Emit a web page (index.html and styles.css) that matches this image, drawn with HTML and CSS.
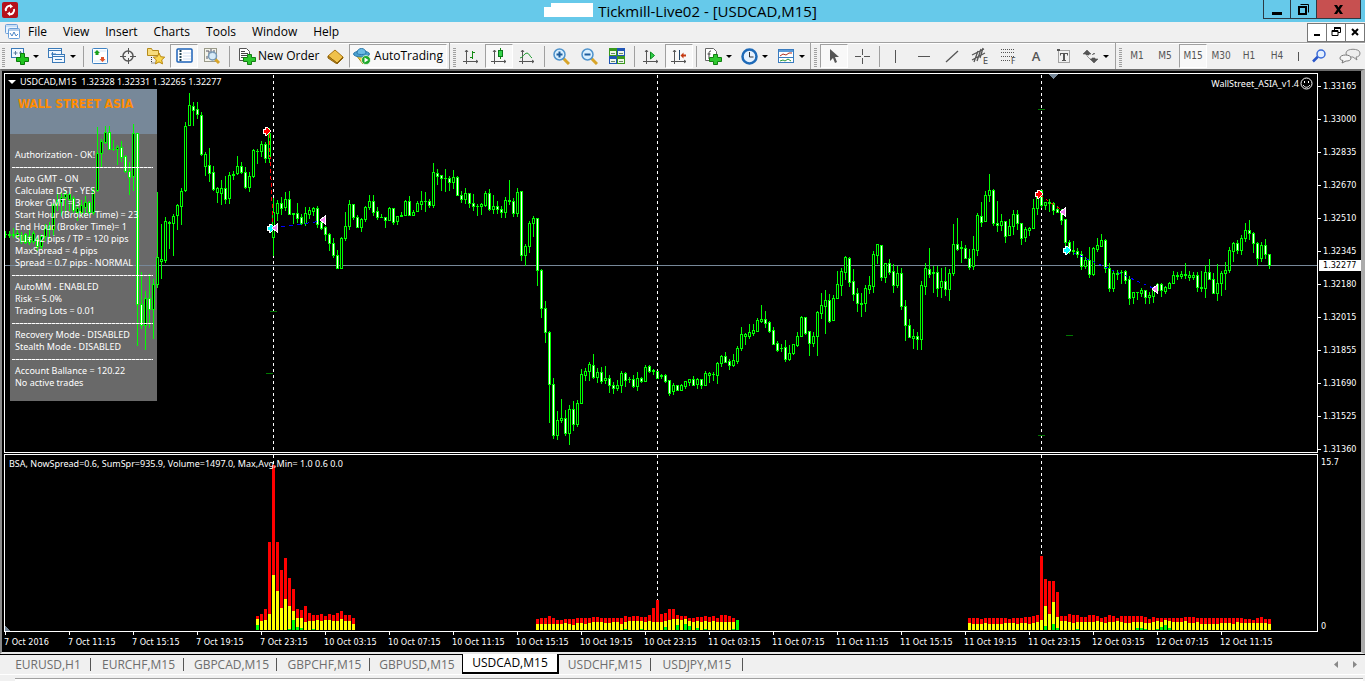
FILE: index.html
```html
<!DOCTYPE html>
<html lang="en">
<head>
<meta charset="utf-8">
<title>Tickmill-Live02 - [USDCAD,M15]</title>
<link rel="stylesheet" href="styles.css">
</head>
<body>
<header class="titlebar">
  <svg class="app-icon" width="16" height="16" viewBox="0 0 16 16"><rect width="16" height="16" rx="2" fill="#b5121b"/><path d="M4 9a4 4 0 0 1 5-5M12 7a4 4 0 0 1-5 5" fill="none" stroke="#fff" stroke-width="2"/><path d="M8 2l3 2.500-3 2zM8 14l-3-2.500 3-2z" fill="#fff"/></svg>
  <div class="caption"><svg width="50" height="16" viewBox="0 0 50 16"><path d="M0 4h7V0h42v14H0z" fill="#fff"/></svg><h1>Tickmill-Live02 - [USDCAD,M15]</h1></div>
  <div class="window-buttons">
    <button class="win min" aria-label="Minimize"><svg width="10" height="10"><path d="M0 6h10v3H0z"/></svg></button>
    <button class="win restore" aria-label="Restore"><svg width="11" height="11"><path d="M2.500.5h8v8" fill="none" stroke="#000"/><path d="M1 3h7v7H1z" fill="none" stroke="#000" stroke-width="2"/></svg></button>
    <button class="win close" aria-label="Close"><svg width="9" height="9"><path d="M0 0h3l1.500 2.500L6 0h3L6 4.500 9 9H6L4.500 6.500 3 9H0l3-4.500z"/></svg></button>
  </div>
</header>
<nav class="menubar">
  <svg class="doc-icon" width="16" height="16" viewBox="0 0 16 16"><rect x=".5" y=".5" width="12" height="9" rx="1" fill="#eaf4ff" stroke="#6a9fd8"/><path d="M.5 2h12" stroke="#6a9fd8" stroke-dasharray="1 1"/><rect x="3.500" y="4.500" width="11" height="10" rx="1" fill="#fff" stroke="#6a9fd8"/><path d="M3.500 6h11" stroke="#6a9fd8"/><path d="M5 9l2 3 2-4 2 4 2-2" fill="none" stroke="#4d86c6"/></svg>
  <button>File</button><button>View</button><button>Insert</button><button>Charts</button><button>Tools</button><button>Window</button><button>Help</button>
  <div class="mdi-buttons">
    <button aria-label="Minimize chart"><svg width="10" height="10"><path d="M2 7h6v2H2z"/></svg></button>
    <button aria-label="Restore chart"><svg width="10" height="10"><path d="M3 .500h6.500v5H7M3.500 0v3M3 1.500h6M1 3.500h6v5H1zM1 4.500h6" fill="none" stroke="#000"/></svg></button>
    <button aria-label="Close chart"><svg width="10" height="10"><path d="M2 2l6 6M8 2l-6 6" stroke="#000" stroke-width="2"/></svg></button>
  </div>
</nav>
<div class="toolbar">
  <div class="group first">
    <button class="tool drop" aria-label="New chart"><svg width="18" height="18"><rect x=".5" y="1.500" width="12" height="9" fill="#f2f8ff" stroke="#3b7ab8"/><path d="M2.500 6h4M4.500 4v4M8 6h3M9.500 4v4" stroke="#5a7d9f"/><path d="M9.500 6.500h4v4h4v4h-4v3h-4v-3h-4v-4h4z" fill="#1fc41f" stroke="#0a7a0a"/></svg></button>
    <button class="tool drop" aria-label="Profiles"><svg width="18" height="18"><rect x=".5" y="1.500" width="13" height="9" fill="#f2f8ff" stroke="#3b7ab8"/><path d="M.5 3.500h13M3 7h5M4.500 5v4" stroke="#3b7ab8"/><rect x="4.500" y="7.500" width="12" height="8" fill="#f2f8ff" stroke="#3b7ab8"/><path d="M4.500 9.500h12M7 12.500h7" stroke="#3b7ab8"/></svg></button>
    <span class="sep"></span>
    <button class="tool" aria-label="Market Watch"><svg width="16" height="16"><rect x=".5" y=".5" width="15" height="15" rx="1" fill="#fff" stroke="#3f83c4"/><path d="M2 13h12M2 3h12" stroke="#d5e6f5"/><path d="M5 2l3 3H6.500v2h-3V5H2z" fill="#1ba01b"/><path d="M10.500 14l3-3H12V9H9v2H7.500z" fill="#e2542a"/></svg></button>
    <button class="tool" aria-label="Data Window"><svg width="16" height="16"><circle cx="8" cy="8" r="5" fill="none" stroke="#555" stroke-width="1.500"/><path d="M8.500 0v6M8.500 10v6M0 8.500h6M10 8.500h6" stroke="#555"/></svg></button>
    <button class="tool" aria-label="Navigator"><svg width="18" height="18"><path d="M.5 1.500h4l1 2h6v5H.500z" fill="#f7dc7b" stroke="#b58a1a"/><path d="M4.500 10v6h4" fill="none" stroke="#333" stroke-dasharray="1 1"/><path d="M12 6l1.700 3.700 4 .5-3 2.700.8 4-3.500-2-3.500 2 .8-4-3-2.700 4-.5z" fill="#fbd84f" stroke="#b8860b"/></svg></button>
    <button class="tool on" aria-label="Terminal"><svg width="17" height="16"><rect x="1" y="1" width="15" height="13" rx="1" fill="#fff" stroke="#1c62b8" stroke-width="1.500"/><path d="M4.500 2v11" stroke="#245" stroke-width="2" stroke-dasharray="2 1"/><path d="M7 5h8M7 8h8M7 11h8" stroke="#cfe0f4"/></svg></button>
    <button class="tool" aria-label="Strategy Tester"><svg width="18" height="18"><rect x="1.500" y="1.500" width="12" height="13" fill="#f3f3ea" stroke="#9a9a8a"/><path d="M3 4h3v5M8 2v5M11 3v4M4 9v3" stroke="#556" fill="none"/><path d="M12 12l4 4" stroke="#d8a52a" stroke-width="3"/><circle cx="9.500" cy="9" r="4" fill="#cfe9fb" fill-opacity=".8" stroke="#7798b5" stroke-width="1.500"/></svg></button>
    <span class="sep"></span>
    <button class="tool label order"><svg width="18" height="18"><path d="M1.500 1.500h7l3 3v9h-10z" fill="#fff" stroke="#555"/><path d="M3 4.500h4M3 6.500h7M3 8.500h7M3 10.500h4" stroke="#444"/><path d="M9.500 7.500h4v3h4v4h-4v3h-4v-3h-4v-4h4z" fill="#2fc82f" stroke="#128012"/></svg><span>New Order</span></button>
    <button class="tool" aria-label="MetaEditor"><svg width="17" height="16"><path d="M1 8l7-6 8 7-6 6z" fill="#f0c14b" stroke="#a87411"/><path d="M1 8v2l9 6 6-6V9l-6 6z" fill="#c98f1d" stroke="#8d610a"/></svg></button>
    <button class="tool label on auto"><svg width="18" height="18"><path d="M3 8l7 9 6-9z" fill="#f5cf3d" stroke="#b28b12"/><ellipse cx="8.500" cy="7" rx="8" ry="3" fill="#4ba0d0" stroke="#2b78a8"/><path d="M4 6c0-6 9-6 9 0 0 2-9 2-9 0" fill="#6cbce6" stroke="#2b78a8"/><circle cx="13" cy="13" r="4.500" fill="#1fa82a" stroke="#fff" stroke-width=".7"/><path d="M11.500 10.500v5l4-2.500z" fill="#fff"/></svg><span>AutoTrading</span></button>
  </div>
  <div class="group charts">
    <button class="tool" aria-label="Bar chart"><svg width="16" height="16"><path d="M3.500 2v14M0 13.500h15M2 4l1.500-2L5 4M13 12l2 1.500-2 1.500" fill="none" stroke="#555"/><path d="M9.500 3v8M7 9.500h2M10 4.500h2" stroke="#138a13" fill="none"/></svg></button>
    <button class="tool on" aria-label="Candlesticks"><svg width="16" height="16"><path d="M3.500 2v14M0 13.500h15M2 4l1.500-2L5 4M13 12l2 1.500-2 1.500" fill="none" stroke="#555"/><path d="M9.500 0v11" stroke="#138a13"/><rect x="7.500" y="2.500" width="4" height="6" fill="#35d44a" stroke="#0b7a1a"/></svg></button>
    <button class="tool" aria-label="Line chart"><svg width="16" height="16"><path d="M3.500 2v14M0 13.500h15M2 4l1.500-2L5 4M13 12l2 1.500-2 1.500" fill="none" stroke="#555"/><path d="M1 10c3 0 4-5 7-5 2 0 3 4 5 5" fill="none" stroke="#1d9a2d"/></svg></button>
    <span class="sep"></span>
    <button class="tool" aria-label="Zoom in"><svg width="18" height="18"><path d="M11 11l6 6" stroke="#d8a52a" stroke-width="3"/><circle cx="7.500" cy="7.500" r="5.500" fill="#d9f0ff" stroke="#4f93cc" stroke-width="1.500"/><path d="M4.500 7.500h6M7.500 4.500v6" stroke="#1f5d9c" stroke-width="2"/></svg></button>
    <button class="tool" aria-label="Zoom out"><svg width="18" height="18"><path d="M11 11l6 6" stroke="#d8a52a" stroke-width="3"/><circle cx="7.500" cy="7.500" r="5.500" fill="#d9f0ff" stroke="#4f93cc" stroke-width="1.500"/><path d="M4.500 7.500h6" stroke="#1f5d9c" stroke-width="2"/></svg></button>
    <button class="tool" aria-label="Tile windows"><svg width="16" height="16"><path d="M0 0h8v8H0zM8 8h8v8H8z" fill="#3a9a1c"/><path d="M8 0h8v8H8zM0 8h8v8H0z" fill="#1f55b5"/><path d="M1 3h6v4H1zM9 3h6v4H9zM1 11h6v4H1zM9 11h6v4H9z" fill="#eef6e8"/><path d="M2 5.500h4M10 5.500h4M2 13.500h4M10 13.500h4" stroke="#6a8a6a"/></svg></button>
    <span class="sep"></span>
    <button class="tool" aria-label="Auto scroll"><svg width="16" height="16"><path d="M3.500 2v14M0 13.500h15M2 4l1.500-2L5 4M13 12l2 1.500-2 1.500" fill="none" stroke="#555"/><path d="M7.500 4v7l4-3.500z" fill="#2fd04a" stroke="#0a8a1a"/></svg></button>
    <button class="tool on" aria-label="Chart shift"><svg width="16" height="16"><path d="M3.500 2v14M0 13.500h15M2 4l1.500-2L5 4M13 12l2 1.500-2 1.500" fill="none" stroke="#555"/><path d="M8.500 2v10" stroke="#246"/><path d="M9.500 7.500l3-3v2H15v2h-2.500v2z" fill="#c43a12"/></svg></button>
    <span class="sep"></span>
    <button class="tool drop" aria-label="Indicators"><svg width="18" height="18"><path d="M1.500 1.500h8l3 3v9h-11z" fill="#fff" stroke="#666"/><path d="M7 4c-2 0-2 1-2 3v5M3.500 7h3" fill="none" stroke="#444"/><path d="M9.500 7.500h4v3h4v4h-4v3h-4v-3h-4v-4h4z" fill="#2fc82f" stroke="#128012"/></svg></button>
    <button class="tool drop" aria-label="Periods"><svg width="17" height="17"><circle cx="8.500" cy="8.500" r="7" fill="#e6f2ff" stroke="#1e6ab8" stroke-width="2.500"/><path d="M8.500 4v5h4" fill="none" stroke="#333"/></svg></button>
    <button class="tool drop" aria-label="Templates"><svg width="17" height="16"><rect x=".5" y="1.500" width="15" height="13" fill="#fff" stroke="#3a7cc0"/><path d="M1 3h14" stroke="#5a9ad8" stroke-width="2"/><path d="M2 8l3-2 3 1 3-2h3" fill="none" stroke="#b03020"/><path d="M1 9.500h14" stroke="#3a7cc0"/><path d="M2 13l3-1 2 1 3-2 3 2" fill="none" stroke="#2a9a3a"/></svg></button>
  </div>
  <div class="group draw">
    <button class="tool on" aria-label="Cursor"><svg width="16" height="16"><path d="M4 1v12l3-3 2 5 2-1-2-5h4z" fill="#555"/></svg></button>
    <button class="tool" aria-label="Crosshair"><svg width="16" height="16"><path d="M8.500 1v6M8.500 10v6M1 8.500h6M10 8.500h6" stroke="#555"/></svg></button>
    <span class="sep"></span>
    <button class="tool" aria-label="Vertical line"><svg width="16" height="16"><path d="M7.500 2v13" stroke="#555"/></svg></button>
    <button class="tool" aria-label="Horizontal line"><svg width="16" height="16"><path d="M2 8.500h12" stroke="#555"/></svg></button>
    <button class="tool" aria-label="Trendline"><svg width="16" height="16"><path d="M2 14L14 3" stroke="#555" stroke-width="1.300"/></svg></button>
    <button class="tool" aria-label="Equidistant channel"><svg width="18" height="18"><path d="M1 8l12-6M1 13L14 6M3 15l4-11M6 14l4-12M9 11l3-10" stroke="#555" stroke-width="1.300"/><text x="12" y="17" class="mark">E</text></svg></button>
    <button class="tool" aria-label="Fibonacci retracement"><svg width="18" height="18"><path d="M2 2.500h14M2 5.500h14M2 9.500h14M2 13.500h9" stroke="#555" stroke-dasharray="1 1"/><text x="12" y="17" class="mark">F</text></svg></button>
    <button class="tool glyph">A</button>
    <button class="tool" aria-label="Text label"><svg width="16" height="16"><rect x="2.500" y="2.500" width="11" height="12" fill="none" stroke="#555" stroke-dasharray="1 1"/><path d="M1 1h3v2H1z" fill="#555"/><path d="M4 5.500h8M4.500 5v2.500M11.500 5v2.500M6 12.500h4" stroke="#555"/><path d="M8 5v8" stroke="#555" stroke-width="2"/></svg></button>
    <button class="tool drop" aria-label="Arrows"><svg width="16" height="16"><path d="M4 2l4 4H6v1H3V6H0zM11 15l-4-4h2v-1h3v1h3zM4 8l3 3M9 7l2-2 1 1" fill="#555" stroke="#555" stroke-width=".6"/></svg></button>
  </div>
  <div class="group periods">
    <button class="tool">M1</button><button class="tool">M5</button><button class="tool on">M15</button><button class="tool">M30</button><button class="tool">H1</button><button class="tool">H4</button>
  </div>
  <div class="extras">
    <button aria-label="More periods"><svg width="2" height="16"><path d="M.5 4v9" stroke="#555"/></svg></button>
    <button aria-label="Search"><svg width="15" height="16"><path d="M6 8.500l-5 5" stroke="#2a56c8" stroke-width="2.500"/><circle cx="9" cy="6" r="4" fill="#e4f0ff" stroke="#3a6ad8" stroke-width="1.500"/></svg></button>
    <button aria-label="Community"><svg width="22" height="16"><path d="M7 5c0-5 14-5 14 0 0 3-2 4-4 4l1 3-4-3c-4 0-7-1-7-4z" fill="#eee" stroke="#888"/><path d="M1 10c0-4 11-4 11 0 0 3-4 3-5 3l-4 2 1-2.500C2 12 1 12 1 10z" fill="#f6f6f6" stroke="#777"/></svg></button>
  </div>
</div>

<main class="chart-window">
  <div class="chart">
    <section class="pane price-pane">
      <aside class="info">
        <h2>WALL STREET ASIA</h2>
        <ul>
          <li>Authorization - OK!</li>
          <li class="rule"></li>
          <li>Auto GMT - ON</li>
          <li>Calculate DST - YES</li>
          <li>Broker GMT = 3</li>
          <li>Start Hour (Broker Time) = 23</li>
          <li>End Hour (Broker Time)= 1</li>
          <li>SL = 42 pips / TP = 120 pips</li>
          <li>MaxSpread = 4 pips</li>
          <li>Spread = 0.7 pips - NORMAL</li>
          <li class="rule"></li>
          <li>AutoMM - ENABLED</li>
          <li>Risk = 5.0%</li>
          <li>Trading Lots = 0.01</li>
          <li class="rule"></li>
          <li>Recovery Mode - DISABLED</li>
          <li>Stealth Mode - DISABLED</li>
          <li class="rule"></li>
          <li>Account Ballance = 120.22</li>
          <li>No active trades</li>
        </ul>
      </aside>
      <svg class="plot" id="price-plot" role="img" aria-label="USDCAD candlesticks"></svg>
      <p class="quote">USDCAD,M15&nbsp; 1.32328 1.32331 1.32265 1.32277</p>
      <p class="expert">WallStreet_ASIA_v1.4<svg width="13" height="13"><circle cx="6.500" cy="6.500" r="5.500" fill="none" stroke="#fff"/><path d="M4 4h1v2H4zM8 4h1v2H8z" fill="#fff"/><path d="M3 8c2 3 5 3 7 0" fill="none" stroke="#fff"/></svg></p>
    </section>
    <div class="scale">
      <ol class="prices"><li>1.33165</li><li>1.33000</li><li>1.32835</li><li>1.32670</li><li>1.32510</li><li>1.32345</li><li>1.32180</li><li>1.32015</li><li>1.31855</li><li>1.31690</li><li>1.31525</li><li>1.31360</li></ol>
      <output class="last">1.32277</output>
    </div>
    <section class="pane spread-pane">
      <svg class="plot" id="spread-plot" role="img" aria-label="Spread histogram"></svg>
      <p class="stats">BSA, NowSpread=0.6, SumSpr=935.9, Volume=1497.0, Max,Avg,Min= 1.0 0.6 0.0</p>
    </section>
    <div class="scale spread-scale"><span>15.7</span><span>0</span></div>
    <ol class="times"><li>7 Oct 2016</li><li>7 Oct 11:15</li><li>7 Oct 15:15</li><li>7 Oct 19:15</li><li>7 Oct 23:15</li><li>10 Oct 03:15</li><li>10 Oct 07:15</li><li>10 Oct 11:15</li><li>10 Oct 15:15</li><li>10 Oct 19:15</li><li>10 Oct 23:15</li><li>11 Oct 03:15</li><li>11 Oct 07:15</li><li>11 Oct 11:15</li><li>11 Oct 15:15</li><li>11 Oct 19:15</li><li>11 Oct 23:15</li><li>12 Oct 03:15</li><li>12 Oct 07:15</li><li>12 Oct 11:15</li></ol>
  </div>
</main>

<nav class="tabs">
  <button>EURUSD,H1</button><button>EURCHF,M15</button><button>GBPCAD,M15</button><button>GBPCHF,M15</button><button>GBPUSD,M15</button><button class="active">USDCAD,M15</button><button>USDCHF,M15</button><button>USDJPY,M15</button>
  <div class="scrollers"><button aria-label="Previous"><svg width="4" height="7"><path d="M4 0v7L0 3.500z" fill="#888"/></svg></button><button aria-label="Next"><svg width="4" height="7"><path d="M0 0v7l4-3.500z" fill="#888"/></svg></button></div>
</nav>
<footer class="terminal"><div></div></footer>
<script src="chart.js"></script>
</body>
</html>
```
FILE: styles.css
```css
* { box-sizing: border-box; }
body {
  margin: 0;
  height: 100vh;
  display: flex;
  flex-direction: column;
  background: #f0f0f0;
  color: #000;
  font: 12px/16px "Open Sans", "Noto Sans", sans-serif;
  overflow: hidden;
}
button { margin: 0; padding: 0; border: 0; background: none; font: inherit; color: inherit; }
ul, ol, p, h1, h2 { margin: 0; padding: 0; list-style: none; font-weight: 400; }
svg { display: block; flex: none; }

.titlebar { flex: none; display: flex; align-items: flex-start; height: 22px; background: #66c9ea; }
.app-icon { margin: 2px; }
.caption { flex: 1; display: flex; justify-content: center; align-items: center; gap: 4px; height: 22px; padding-left: 78px; }
.caption h1 { font-size: 15px; line-height: 20px; white-space: nowrap; }
.window-buttons { display: flex; height: 19px; margin-right: 4px; }
.win { display: flex; align-items: center; justify-content: center; border: 1px solid #2c3a44; border-top: 0; }
.win.min { width: 28px; }
.win.restore { width: 26px; border-left: 0; }
.win.close { width: 44px; border-left: 0; background: #c75050; }
.win.min svg { margin-top: 4px; }

.menubar { flex: none; display: flex; align-items: center; height: 20px; }
.doc-icon { margin: 0 7px 0 5px; }
.menubar > button { margin-right: 16px; }
.mdi-buttons { display: flex; margin-left: auto; height: 19px; }
.mdi-buttons button { width: 20px; display: flex; align-items: center; justify-content: center; border: 1px solid #777; background: #fff; margin-left: -1px; }

.toolbar { flex: none; display: flex; height: 27px; border-top: 1px solid #a0a0a0; box-shadow: inset 0 1px #fff; }
.group { position: relative; display: flex; align-items: center; padding-left: 9px; border-right: 1px solid #a0a0a0; }
.group::before { content: ""; position: absolute; left: 3px; top: 5px; width: 3px; height: 19px; background: repeating-linear-gradient(#a0a0a0 0 1px, #f0f0f0 1px 2px); }
.group.first { padding: 0 2px 0 6px; }
.group.first::before { left: 2px; }
.group.charts { padding-left: 7px; }
.group.periods { padding-left: 7px; border: 0; }
.tool { width: 28px; height: 24px; display: flex; align-items: center; justify-content: center; color: #555; }
.tool.drop { width: 37px; justify-content: flex-start; gap: 4px; padding-left: 5px; }
.tool.drop::after { content: ""; border: 3px solid transparent; border-top: 3px solid #000; border-bottom: 0; }
.tool.on { background: #f8f8f8; border: 1px solid #a0a0a0; border-right-color: #fff; border-bottom-color: #fff; background-clip: padding-box; }
.tool.label { color: #000; gap: 2px; }
.tool.order { width: 89px; justify-content: flex-start; padding-left: 6px; }
.tool.auto { width: 98px; gap: 3px; }
.tool.glyph { font-weight: 600; font-size: 13px; }
.periods .tool { font: 10px/12px "DejaVu Sans Condensed", "DejaVu Sans", sans-serif; }
.mark { font: 8px "DejaVu Sans", sans-serif; fill: #444; }
.sep { width: 6px; height: 21px; border-left: 1px solid #a0a0a0; margin: 0 -3px 0 3px; }
.extras { flex: 1; display: flex; align-items: center; justify-content: flex-end; gap: 12px; padding-right: 4px; }

.chart-window {
  flex: 1;
  min-height: 0;
  display: flex;
  flex-direction: column;
  padding: 2px 0 0 2px;
  border: solid;
  border-width: 2px 4px 2px 2px;
  border-color: #6b6b6b #ababab #e8e8e8 #8a8a8a;
  background: #000;
}
.chart {
  flex: 1;
  min-height: 0;
  display: grid;
  grid-template-columns: minmax(0, 1fr) 43px;
  grid-template-rows: minmax(0, 1fr) 178px 19px;
  row-gap: 1px;
  color: #fff;
  font: 9px/12px "DejaVu Sans Condensed", "DejaVu Sans", sans-serif;
}
.pane { position: relative; border: 1px solid #fff; min-height: 0; font-family: "Noto Sans", sans-serif; }
.plot { position: absolute; z-index: 1; inset: 0; width: 100%; height: 100%; overflow: hidden; }
.quote, .expert, .stats { position: absolute; z-index: 2; white-space: nowrap; }
.quote { left: 15px; top: 2px; }
.quote::before { content: ""; position: absolute; left: -12px; top: 4px; border: 4px solid transparent; border-top-color: #fff; border-bottom: 0; }
.expert { right: 4px; top: 3px; display: flex; align-items: center; gap: 1px; }
.stats { left: 4px; top: 3px; }
.info { position: absolute; left: 5px; top: 15px; width: 147px; height: 312px; }
.info::before { content: ""; position: absolute; inset: 0; background: linear-gradient(#778899 45px, #696969 45px); }
.info h2, .info ul { position: relative; z-index: 2; white-space: nowrap; }
.info h2 { height: 45px; padding: 7px 8px; color: #ff8c00; font: bold 12px/16px "DejaVu Sans Condensed", "DejaVu Sans", sans-serif; }
.info ul { padding: 15px 4px 0 5px; }
.info li { height: 12px; }
.info .rule { margin: 0 0 0 -3px; background: repeating-linear-gradient(90deg, #fff 0 3px, #bbb 3px 4px) 0 6px / 100% 1px no-repeat; }
.scale { position: relative; min-height: 0; }
.prices li { position: relative; height: 33px; padding-left: 5px; line-height: 26px; }
.prices li::before { content: ""; position: absolute; left: 0; top: 13px; width: 3px; height: 1px; background: #fff; }
.last { position: absolute; left: 1px; right: 0; top: 187px; height: 11px; padding-left: 4px; line-height: 11px; background: #fff; color: #000; }
.spread-scale { display: flex; flex-direction: column; justify-content: space-between; padding: 2px 0 0 3px; }
.times { grid-column: 1 / -1; display: flex; margin-top: -1px; overflow: hidden; }
.times li { position: relative; flex: none; width: 64px; padding-top: 4px; white-space: nowrap; }
.times li::before { content: ""; position: absolute; left: 1px; top: 0; width: 1px; height: 3px; background: #fff; }

.tabs { flex: none; display: flex; height: 20px; border-top: 1px solid #000; color: #6d6d6d; }
.tabs > button { position: relative; flex: none; width: 93px; padding-left: 2px; line-height: 18px; }
.tabs > button:first-child { width: 91px; padding-left: 5px; }
.tabs > button::after { content: ""; position: absolute; right: 0; top: 3px; width: 1px; height: 13px; background: #555; }
.tabs > button:nth-child(5) { width: 92px; }
.tabs > button:nth-child(5)::after { display: none; }
.tabs > .active { width: 97px; margin: -1px 0 0; padding-left: 0; background: #fff; color: #000; border: solid #000; border-width: 0 2px 2px 1px; }
.tabs > .active::after { display: none; }
.tabs > .active ~ button { width: 92px; padding-left: 0; }
.scrollers { margin-left: auto; display: flex; align-items: center; gap: 15px; padding-right: 8px; }
.terminal { flex: none; height: 7px; padding: 3px 2px 0 15px; border-top: 1px solid #fff; }
.terminal div { height: 3px; background: #fff; border-top: 1px solid #a0a0a0; }
```
FILE: chart.js
```js
// One entry per M15 bar: high, body top, body bottom, low, and "w" for a falling bar.
const ORIGIN_Y = 74;
const STEP = 4;
const bars = `231 234 234 237,231 234 235 237,228 234 235 237,230 233 236 237,232 235 241 243,233 234 242 243 w,230 236 242 244 w,231 233 241 243,236 239 246 250 w,234 236 246 248,
224 228 236 240,222 226 229 238,203 204 229 235,192 200 203 210,193 197 202 215,190 194 197 214,192 194 199 210,196 198 210 212 w,204 208 212 220,200 205 212 216,
196 202 207 214,201 202 212 214 w,188 191 212 214,127 153 190 191,139 141 153 167,126 132 142 143,126 132 149 149 w,140 149 149 150,145 147 149 164,141 147 157 161 w,
155 156 171 172 w,162 171 177 194 w,124 133 176 190,133 133 304 345 w,272 304 325 328 w,291 298 325 349,274 298 309 327 w,279 284 309 338,192 257 284 287,224 259 261 278,
217 221 260 262,221 222 223 248,214 216 223 255,204 205 215 229,188 191 206 224,122 126 190 191,93 105 125 125,102 106 110 125 w,102 109 114 118 w,112 115 154 155 w,
152 154 166 175,148 165 173 181 w,166 172 189 190 w,187 188 192 202,180 188 193 204,176 188 199 203 w,172 175 198 203,171 174 175 179,156 166 173 174,162 166 172 173 w,
167 172 187 188 w,172 176 187 191,149 150 176 177,149 151 151 163,141 144 151 156,142 144 158 162 w,128 133 158 162,198 212 237 255,200 203 213 220,197 203 208 214 w,
192 199 207 210,191 199 214 214 w,213 213 214 223,203 213 218 222 w,214 217 223 224 w,207 213 223 225,207 210 214 218,207 208 211 215,206 208 224 227 w,220 222 228 229 w,
226 227 234 240 w,233 234 243 250 w,238 243 255 257 w,250 255 268 268 w,237 238 268 268,212 226 238 240,200 204 226 229,204 204 217 219 w,215 217 227 227 w,218 219 227 231,
206 207 219 221,195 201 207 209,195 201 212 215 w,207 211 217 219 w,214 217 217 217,217 217 220 227 w,207 208 220 220,208 208 222 224 w,216 216 221 224,212 215 216 216,
200 201 215 215,196 201 215 215 w,210 212 215 215,201 203 211 211,191 201 204 209,192 201 201 211,199 201 205 207 w,163 172 205 207,169 173 176 184 w,175 175 178 190 w,
169 178 178 191,176 178 182 190 w,170 177 182 188,176 177 195 195 w,191 195 199 202 w,188 193 199 203,193 193 203 207 w,194 203 206 210 w,204 206 206 215,203 204 206 214,
191 193 205 206,189 193 209 210 w,195 206 209 213,201 206 209 213 w,206 209 212 217 w,197 200 212 217,180 200 201 204,198 201 213 216 w,188 192 213 216,191 191 255 260 w,
244 246 255 265,221 223 246 252,216 218 223 236,218 218 270 285 w,269 270 308 317 w,301 308 332 342 w,331 332 384 422 w,378 384 435 438 w,411 420 435 439,399 418 420 422,
410 418 433 435 w,405 409 433 444,401 409 424 430 w,400 403 424 426,369 374 403 403,368 371 375 380,362 364 371 380,354 365 377 378 w,368 372 377 382,367 372 381 383 w,
366 378 380 383,375 378 385 392 w,382 385 388 393 w,380 385 388 390,371 373 385 392,372 373 380 386 w,377 379 379 382,375 379 386 387 w,372 378 386 390,377 378 381 382 w,
365 367 381 381,365 366 371 372 w,369 370 371 374,371 371 378 378 w,374 375 376 378,374 375 381 382 w,380 380 393 395 w,383 385 391 394,385 385 390 390 w,384 385 390 390,
381 381 386 388,379 379 382 385,376 379 385 385 w,378 379 384 388,379 379 385 388 w,371 373 385 385,372 373 375 382,372 374 374 380,362 363 375 383,355 356 363 366,
352 356 362 362 w,359 361 365 369 w,354 360 365 366,346 348 361 363,327 334 348 350,333 334 336 344,324 332 336 338,324 330 333 335,318 320 331 331,305 319 321 322,
311 319 323 327 w,321 322 331 332 w,327 330 344 344 w,341 343 350 351 w,344 348 348 351,340 347 359 361 w,345 353 359 360,344 344 353 354,332 336 345 346,316 317 336 336,
317 317 333 334 w,331 331 343 355 w,332 336 343 346,311 312 336 355,293 305 313 318,290 300 306 333,294 300 321 322 w,295 298 320 320,271 284 298 298,268 271 285 295,
256 257 272 279,257 258 282 286 w,269 281 294 300 w,288 293 303 311 w,293 303 304 316,285 288 303 311,276 285 289 293,251 254 286 292,244 244 255 263,245 245 277 280 w,
263 263 277 282,259 263 272 274 w,264 271 285 292 w,266 273 285 287,268 273 306 309 w,300 306 325 340 w,319 325 337 337 w,329 336 338 348,332 336 339 349 w,281 285 339 349,
263 268 286 294,248 269 274 277 w,266 272 273 292,266 272 288 296 w,268 281 287 297,267 281 289 295 w,269 273 289 300,224 244 273 275,218 244 249 250 w,241 247 248 262,
245 248 258 258 w,249 258 267 269 w,236 249 266 269,213 215 250 255,202 216 222 226 w,191 195 221 221,174 190 195 201,189 190 223 225 w,201 223 225 231 w,214 221 225 230,
221 221 236 242 w,219 226 235 235,210 214 226 234,210 214 223 229 w,223 223 238 244 w,227 229 237 241,227 228 230 235,199 208 228 228,190 196 208 214,190 190 205 207 w,
202 202 205 209,199 202 203 211,202 203 210 214 w,206 209 212 212 w,209 211 220 224 w,219 219 242 245 w,240 242 251 253 w,241 250 251 254,248 251 254 257 w,251 254 266 269 w,
257 260 266 268,247 260 274 277 w,247 248 274 275,238 245 249 251,234 240 246 246,239 240 268 272 w,263 268 288 291 w,271 273 288 291,270 273 274 279,270 272 272 283,
270 271 280 283 w,276 279 298 304 w,292 292 297 303,292 292 292 299,288 290 293 296,290 290 297 303 w,292 295 297 303,288 289 296 302,283 284 290 290,283 284 290 296 w,
286 287 291 293,282 283 288 288,271 275 283 283,272 275 276 279,271 274 276 278,263 274 275 278,271 275 277 280,272 275 277 279,272 275 287 291 w,271 287 288 291,
265 272 288 297,259 272 279 279 w,273 279 293 293 w,264 283 293 300,271 273 283 295,262 270 273 289,247 250 270 272,242 243 251 261,240 243 250 253 w,235 238 250 254,
223 230 238 241,220 230 233 239 w,232 233 243 252 w,242 243 258 265 w,242 245 258 261,239 245 254 258 w,254 254 265 268 w`.split(",").map(s => s.trim().split(" "));

// Spread histogram runs: first bar index, then maximum, average and minimum heights.
const runs = [
  { from: 63,
    max: [14,16,21,88,165,88,60,72,52,41,21,20,24,17,15,15,16,14,16,15,17,19,15,15,12],
    avg: [11,9,10,16,55,39,22,31,24,19,12,12,8,9,9,10,9,10,10,9,9,11,9,9,6],
    min: { 0: 5, 8: 1, 9: 10, 10: 3, 11: 2, 14: 1 } },
  { from: 133,
    max: [11,12,12,14,12,10,10,11,11,11,12,12,12,12,13,13,12,12,12,12,12,12,14,13,14,14,13,13,15,22,30,16,17,21,21,15,14,14,12,12,13,13,14,13,14,12,15,15,14,12,10],
    avg: [6,6,6,6,6,6,6,7,6,5,7,7,6,7,8,8,8,7,7,8,8,6,8,9,9,9,9,8,9,8,8,8,9,10,11,11,10,11,9,8,9,8,9,8,9,8,8,8,8,8,10],
    min: { 22: 1, 26: 1, 32: 3, 35: 5, 37: 6, 38: 4, 40: 2, 42: 1, 49: 1, 50: 10 } },
  { from: 241,
    max: [12,12,12,11,12,12,12,12,12,12,11,12,12,12,13,13,14,15,74,51,49,49,38,14,14,16,15,15,13,13,15,15,14,12,13,15,14,12,14,14,14,14,14,14,13,11,13,12,12,12,12,12,12,12,13,13,13,12,12,12,12,12,12,12,12,12,12,12,12,11,11,10,12,13,11,11],
    avg: [7,6,6,6,7,6,6,6,6,7,7,7,6,7,7,6,7,8,10,24,16,28,13,9,9,8,7,8,8,8,8,8,9,8,7,8,8,9,8,7,7,8,8,8,7,7,8,9,8,10,9,8,8,8,9,7,7,8,6,6,6,6,6,7,7,7,6,8,7,7,7,7,7,7,7,6],
    min: { 19: 4, 21: 6, 22: 2, 27: 1, 42: 2, 43: 2, 44: 1, 47: 1, 48: 3, 49: 5, 50: 2 } }
];

const rect = (x, y, w, h, fill) => `<rect x="${x}" y="${y}" width="${w}" height="${h}" fill="${fill}"/>`;
const path = (d, attrs) => `<path d="${d}" ${attrs}/>`;

// Day separators
const separators = [67, 163, 259]
  .map(i => path(`M${i * STEP + 0.5} 1V400`, 'stroke="#fff" stroke-dasharray="3 3"')).join("");

let price = separators + rect(0, 191, 2000, 1, "#778899");
bars.forEach(([h, t, b, l, falling], i) => {
  const x = i * STEP;
  [h, t, b, l] = [h, t, b, l].map(v => v - ORIGIN_Y);
  price += rect(x, h, 1, l - h + 1, "#0f0") + rect(x - 1, t, 3, b - t + 1, "#0f0");
  if (b - t > 1) price += rect(x, t + 1, 1, b - t - 1, falling ? "#fff" : "#000");
});

// Stop and target levels of past orders
[[265, 237], [261, 299], [1033, 35], [1061, 261], [1033, 361]]
  .forEach(([x, y]) => { price += rect(x, y, 7, 1, "#007800"); });

// Links between the open and close of each trade
price += path("M264 60L268 150", 'stroke="#f00" stroke-dasharray="4 3" fill="none"');
price += path("M1035 121L1058 137", 'stroke="#f00" stroke-dasharray="3 4" fill="none"');
price += path("M268 154L317 147", 'stroke="#00f" stroke-dasharray="4 4" fill="none"');
price += path("M1062 176L1150 215", 'stroke="#00f" stroke-dasharray="3 4" fill="none"');

const arrow = (x, y, fill) => path(`M${x} ${y - 2}h2v-2h2l4 4-4 4h-2v-2h-2z`, `fill="${fill}" stroke="#fff"`);
const flag = (x, y) => path(`M${x} ${y}l5-4v8z`, 'fill="#ee82ee" stroke="#fff"');
price += arrow(258, 57, "#f00") + arrow(262, 154, "#0ff") + arrow(1030, 120, "#f00") + arrow(1058, 176, "#0ff");
price += flag(267, 154) + flag(315, 146) + flag(1055, 138) + flag(1147, 215);
price += path("M1044 0h9l-4.500 5z", 'fill="#778899"');

const BASE = 175;
let spread = [67, 163, 259].map(i => path(`M${i * STEP + 0.5} 0V${BASE}`, 'stroke="#fff" stroke-dasharray="3 3"')).join("");
runs.forEach(({ from, max, avg, min }) => max.forEach((m, n) => {
  const x = (from + n) * STEP - 1;
  spread += rect(x, BASE - m, 3, m, "#f00") + rect(x, BASE - avg[n], 3, avg[n], "#ff0");
  if (min[n]) spread += rect(x, BASE - min[n], 3, min[n], "#0f0");
}));
spread += path("M0 171l5 5H0z", 'fill="#778899"');

document.getElementById("price-plot").innerHTML = `<g shape-rendering="crispEdges">${price}</g>`;
document.getElementById("spread-plot").innerHTML = `<g shape-rendering="crispEdges">${spread}</g>`;
```
